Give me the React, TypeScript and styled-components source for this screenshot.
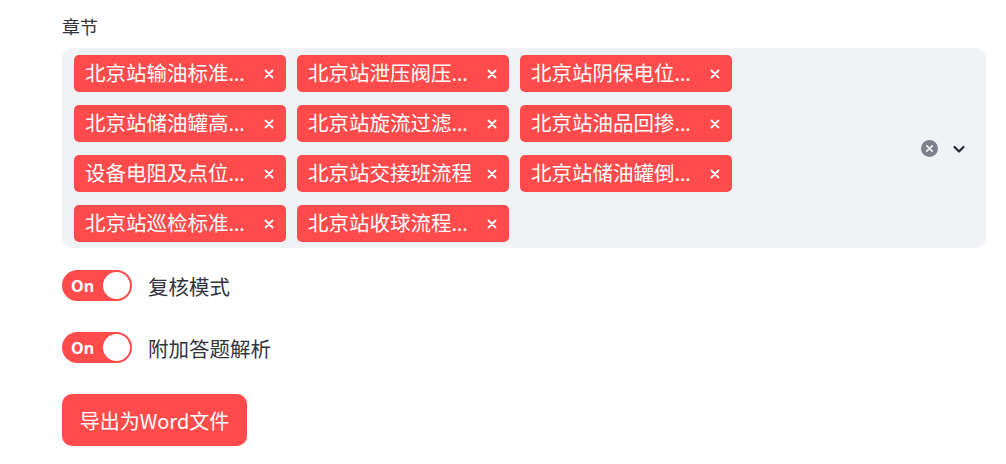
import React, { useState } from 'react';
import styled, { createGlobalStyle } from 'styled-components';

const GlobalStyle = createGlobalStyle`
  html, body {
    margin: 0;
    padding: 0;
    background: #ffffff;
  }
  body {
    font-family: "Noto Sans", "Noto Sans CJK SC", sans-serif;
    color: #31333f;
  }
`;

const chapters = [
  '北京站输油标准操作规程',
  '北京站泄压阀压力测试',
  '北京站阴保电位测试',
  '北京站储油罐高液位',
  '北京站旋流过滤器清洗',
  '北京站油品回掺流程',
  '设备电阻及点位测试',
  '北京站交接班流程',
  '北京站储油罐倒罐操作',
  '北京站巡检标准流程',
  '北京站收球流程操作',
];

const CloseMark: React.FC<{ size?: number }> = ({ size = 10 }) => (
  <svg width={size} height={size} viewBox="0 0 10 10">
    <path d="M1.5 1.5 L8.5 8.5 M8.5 1.5 L1.5 8.5" stroke="currentColor" strokeWidth="1.8" strokeLinecap="round" />
  </svg>
);

const App: React.FC = () => {
  const [review, setReview] = useState(true);
  const [analysis, setAnalysis] = useState(true);

  return (
    <Page>
      <GlobalStyle />
      <FieldLabel>章节</FieldLabel>
      <SelectBox>
        <TagArea>
          {chapters.map((c) => (
            <Tag key={c} title={c}>
              <TagText>{c}</TagText>
              <TagClose>
                <CloseMark />
              </TagClose>
            </Tag>
          ))}
        </TagArea>
        <Controls>
          <ClearIcon>
            <svg width="17" height="17" viewBox="0 0 17 17">
              <circle cx="8.5" cy="8.5" r="8.5" fill="#7e818c" />
              <path d="M5.8 5.8 L11.2 11.2 M11.2 5.8 L5.8 11.2" stroke="#f0f2f6" strokeWidth="1.8" strokeLinecap="round" />
            </svg>
          </ClearIcon>
          <svg width="16" height="16" viewBox="0 0 16 16">
            <path d="M3.5 6 L8 10.5 L12.5 6" fill="none" stroke="#262730" strokeWidth="2.2" strokeLinecap="round" strokeLinejoin="round" />
          </svg>
        </Controls>
      </SelectBox>

      <ToggleRow onClick={() => setReview(!review)}>
        <Switch $on={review}>
          <SwitchText>{review ? 'On' : 'Off'}</SwitchText>
          <Knob $on={review} />
        </Switch>
        <ToggleLabel>复核模式</ToggleLabel>
      </ToggleRow>

      <ToggleRow onClick={() => setAnalysis(!analysis)}>
        <Switch $on={analysis}>
          <SwitchText>{analysis ? 'On' : 'Off'}</SwitchText>
          <Knob $on={analysis} />
        </Switch>
        <ToggleLabel>附加答题解析</ToggleLabel>
      </ToggleRow>

      <ExportButton>导出为Word文件</ExportButton>
    </Page>
  );
};

const Page = styled.div`
  display: flex;
  flex-direction: column;
  align-items: flex-start;
  padding: 12px 20px 0 62px;
`;

const FieldLabel = styled.div`
  font-family: "Noto Sans CJK SC", sans-serif;
  font-size: 18px;
  line-height: 28px;
  height: 28px;
  color: #31333f;
  margin-bottom: 8px;
`;

const SelectBox = styled.div`
  box-sizing: border-box;
  width: 924px;
  height: 200px;
  display: flex;
  align-items: center;
  background: #f0f2f6;
  border-radius: 10px;
  padding: 7px 0 6px 12px;
`;

const TagArea = styled.div`
  flex: 1;
  display: flex;
  flex-wrap: wrap;
  align-content: flex-start;
  gap: 13px 11px;
  align-self: stretch;
`;

const Tag = styled.div`
  box-sizing: border-box;
  width: 212px;
  height: 37px;
  display: flex;
  align-items: center;
  padding: 0 12px 0 11px;
  background: #ff4b4b;
  border-radius: 5px;
  color: #ffffff;
`;

const TagText = styled.span`
  font-family: "Noto Sans", "Noto Sans CJK SC", sans-serif;
  font-size: 20.5px;
  line-height: 37px;
  width: 168px;
  white-space: nowrap;
  overflow: hidden;
  text-overflow: ellipsis;
`;

const TagClose = styled.span`
  margin-left: auto;
  display: flex;
  align-items: center;
  color: #ffffff;
`;

const Controls = styled.div`
  display: flex;
  align-items: center;
  gap: 13px;
  padding: 0 19px 0 0;
`;

const ClearIcon = styled.span`
  display: flex;
`;

const ToggleRow = styled.div`
  display: flex;
  align-items: center;
  height: 31px;
  margin-top: 22px;
  cursor: pointer;

  & + & {
    margin-top: 31px;
  }
`;

const Switch = styled.div<{ $on: boolean }>`
  position: relative;
  box-sizing: border-box;
  width: 70px;
  height: 31px;
  border-radius: 16px;
  background: ${(p) => (p.$on ? '#ff4b4b' : '#d0d3da')};
  display: flex;
  align-items: center;
  padding-left: 9px;
`;

const SwitchText = styled.span`
  font-family: "Noto Sans", sans-serif;
  font-weight: 700;
  font-size: 16px;
  color: #ffffff;
`;

const Knob = styled.span<{ $on: boolean }>`
  position: absolute;
  top: 2px;
  left: ${(p) => (p.$on ? '41px' : '2px')};
  width: 27px;
  height: 27px;
  border-radius: 50%;
  background: #ffffff;
`;

const ToggleLabel = styled.span`
  margin-left: 16px;
  font-family: "Noto Sans CJK SC", sans-serif;
  font-size: 20.5px;
  color: #31333f;
`;

const ExportButton = styled.button`
  margin-top: 31px;
  width: 185px;
  height: 52px;
  border: none;
  border-radius: 10px;
  background: #ff4b4b;
  color: #ffffff;
  font-family: "Noto Sans CJK SC", sans-serif;
  font-size: 20px;
  cursor: pointer;
`;

export default App;
